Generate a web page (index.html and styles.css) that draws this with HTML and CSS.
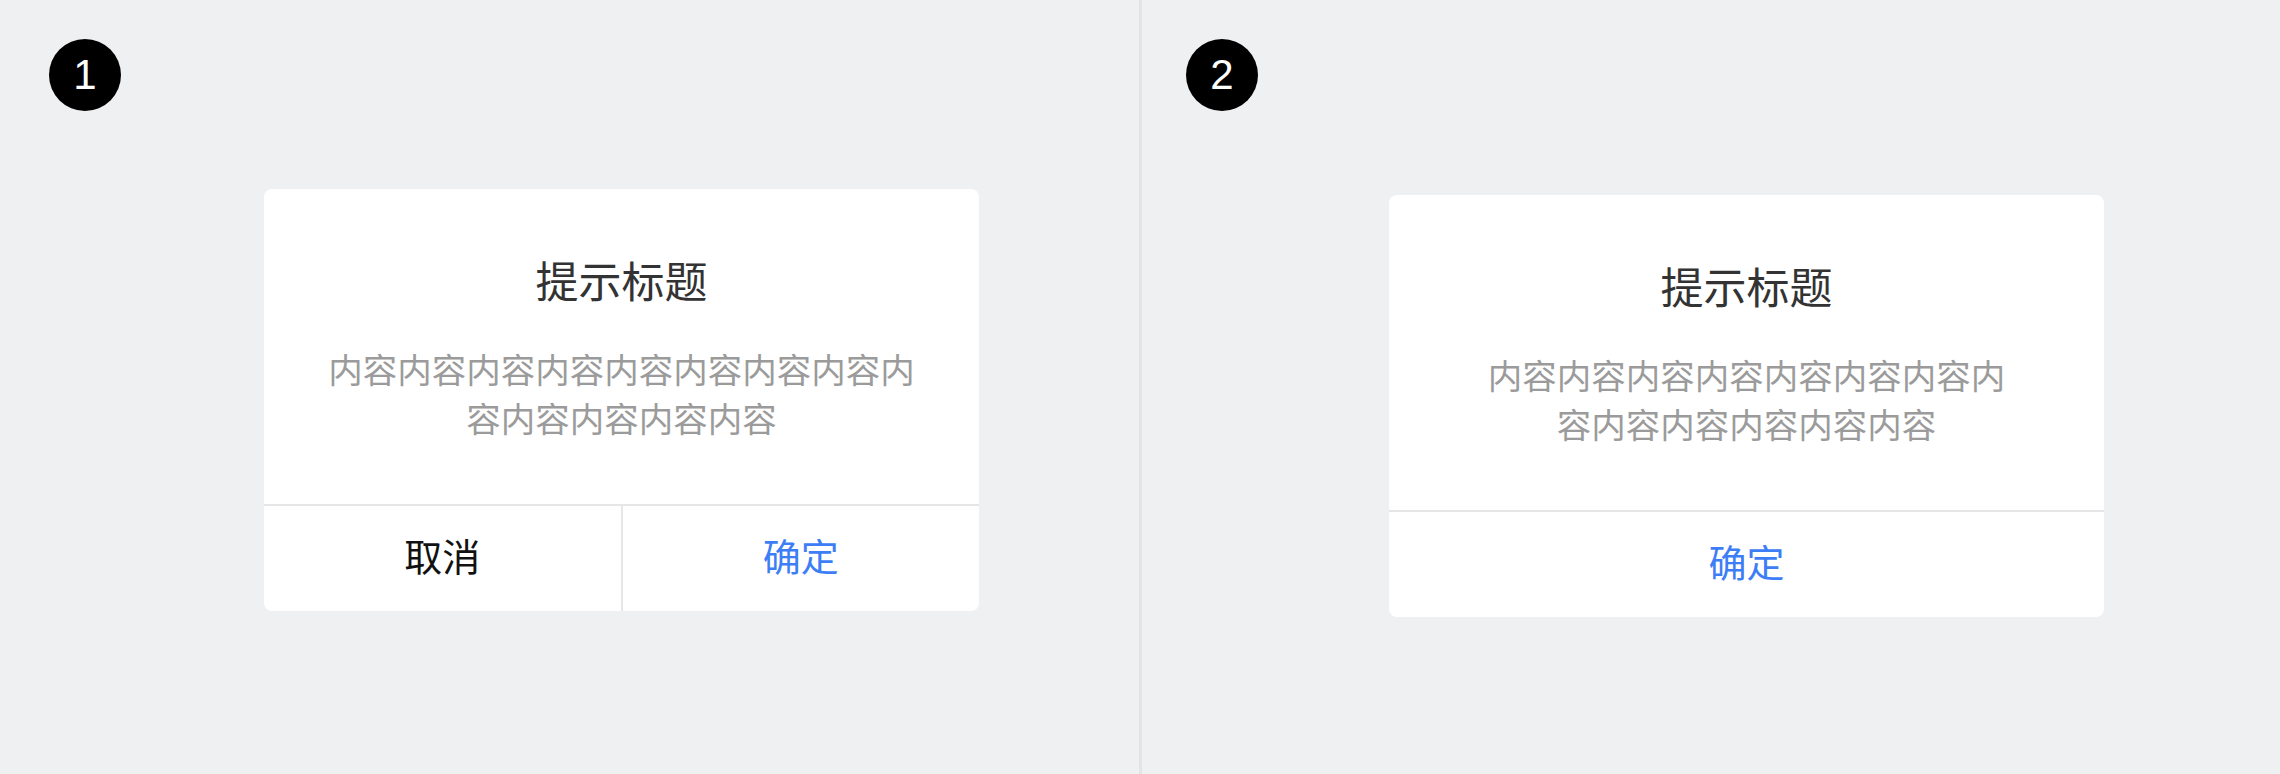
FILE: index.html
```html
<!DOCTYPE html>
<html lang="zh-CN">
<head>
<meta charset="utf-8">
<title>Dialog</title>
<link rel="stylesheet" href="styles.css">
</head>
<body>
<main class="board">
  <section class="panel panel-one">
    <div class="badge">1</div>
    <div class="dialog">
      <div class="dialog-body">
        <div class="dialog-title">提示标题</div>
        <div class="dialog-content">内容内容内容内容内容内容内容内容内容内容内容内容内容</div>
      </div>
      <div class="dialog-footer">
        <div class="dialog-btn btn-cancel">取消</div>
        <div class="dialog-btn btn-confirm">确定</div>
      </div>
    </div>
  </section>
  <div class="split"></div>
  <section class="panel panel-two">
    <div class="badge">2</div>
    <div class="dialog dialog-single">
      <div class="dialog-body">
        <div class="dialog-title">提示标题</div>
        <div class="dialog-content">内容内容内容内容内容内容内容内容内容内容内容内容内容</div>
      </div>
      <div class="dialog-footer">
        <div class="dialog-btn btn-confirm">确定</div>
      </div>
    </div>
  </section>
</main>
</body>
</html>
```

FILE: styles.css
```css
* {
  box-sizing: border-box;
}

html, body {
  margin: 0;
  padding: 0;
  background: #eff0f2;
}

body {
  font-family: "Noto Sans CJK SC", "Noto Sans", sans-serif;
  width: 2280px;
  height: 774px;
  overflow: hidden;
}

.board {
  display: grid;
  grid-template-columns: 1139px 3px 1fr;
  height: 774px;
}

.split {
  background: #e3e4e6;
}

.panel {
  display: flex;
  flex-direction: column;
  align-items: flex-start;
  padding-top: 39px;
}

.panel-one {
  padding-left: 49px;
}

.panel-two {
  padding-left: 44px;
}

.badge {
  width: 72px;
  height: 72px;
  border-radius: 50%;
  background: #000;
  color: #fff;
  display: flex;
  align-items: center;
  justify-content: center;
  font-family: "Liberation Sans", Arial, sans-serif;
  font-size: 42px;
  line-height: 1;
}

.dialog {
  width: 715px;
  background: #fff;
  border-radius: 8px;
  overflow: hidden;
}

.panel-one .dialog {
  margin-top: 78px;
  margin-left: 215px;
}

.panel-two .dialog {
  margin-top: 84px;
  margin-left: 203px;
}

.dialog-body {
  padding: 60px 56px 62px;
  text-align: center;
  border-bottom: 2px solid #e6e6e8;
}

.dialog-single .dialog-body {
  padding-left: 91px;
  padding-right: 91px;
}

.dialog-title {
  font-size: 43px;
  line-height: 60px;
  color: #333;
}

.dialog-content {
  margin-top: 35px;
  font-size: 34.5px;
  line-height: 49px;
  color: #9b9b9b;
  word-break: break-all;
}

.dialog-footer {
  display: flex;
  height: 105px;
}

.dialog-btn {
  flex: 1;
  display: flex;
  align-items: center;
  justify-content: center;
  padding-bottom: 9px;
  font-size: 38px;
}

.dialog-btn + .dialog-btn {
  border-left: 2px solid #e6e6e8;
}

.btn-cancel {
  color: #111;
}

.btn-confirm {
  color: #3d7ef6;
}
```
